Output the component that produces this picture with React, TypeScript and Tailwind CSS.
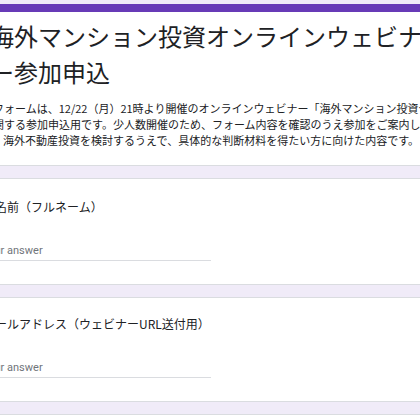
import React from 'react';

const jp = "font-['Noto_Sans_CJK_JP',_'Noto_Sans',_sans-serif]";

const Question = ({ label, top }: { label: string; top: string }) => (
  <div className={`rounded-lg border border-[#dadce0] bg-white pl-[27px] pb-[23px] ${top}`}>
    <div className={`${jp} ml-[1px] whitespace-nowrap text-[12px] leading-[18px] text-[#202124]`}>{label}</div>
    <div className="mt-[26px] w-[229px] border-b border-[#dadce0] font-['Roboto',_sans-serif] text-[11px] leading-[18px] text-[#70757a]">
      Your answer
    </div>
  </div>
);

export default function App() {
  return (
    <div className="h-[420px] w-[420px] overflow-hidden bg-[#f0ebf8]">
      <div className="ml-[-46px] flex w-[520px] flex-col gap-3 pt-[4px]">
        <div className="overflow-hidden rounded-lg border-x border-b border-[#dadce0] bg-white">
          <div className="h-[8px] bg-[#673ab7]" />
          <div className="pl-[27px] pt-[6px] pb-[17px]">
            <h1 className={`${jp} ml-[8px] whitespace-nowrap text-[24px] font-normal leading-[36px] text-[#202124]`}>
              海外マンション投資オンラインウェビナ
              <br />
              ー参加申込
            </h1>
            <div className={`${jp} mt-[10px] whitespace-nowrap text-[11px] leading-[16px] text-[#202124]`}>
              <p>本フォームは、12/22（月）21時より開催のオンラインウェビナー「海外マンション投資セミナー」</p>
              <p>に関する参加申込用です。少人数開催のため、フォーム内容を確認のうえ参加をご案内しま</p>
              <p>す。海外不動産投資を検討するうえで、具体的な判断材料を得たい方に向けた内容です。</p>
            </div>
          </div>
        </div>
        <Question label="お名前（フルネーム）" top="pt-[19px]" />
        <Question label="メールアドレス（ウェビナーURL送付用）" top="pt-[17px]" />
        <div className="h-[80px] rounded-lg border border-[#dadce0] bg-white" />
      </div>
    </div>
  );
}
